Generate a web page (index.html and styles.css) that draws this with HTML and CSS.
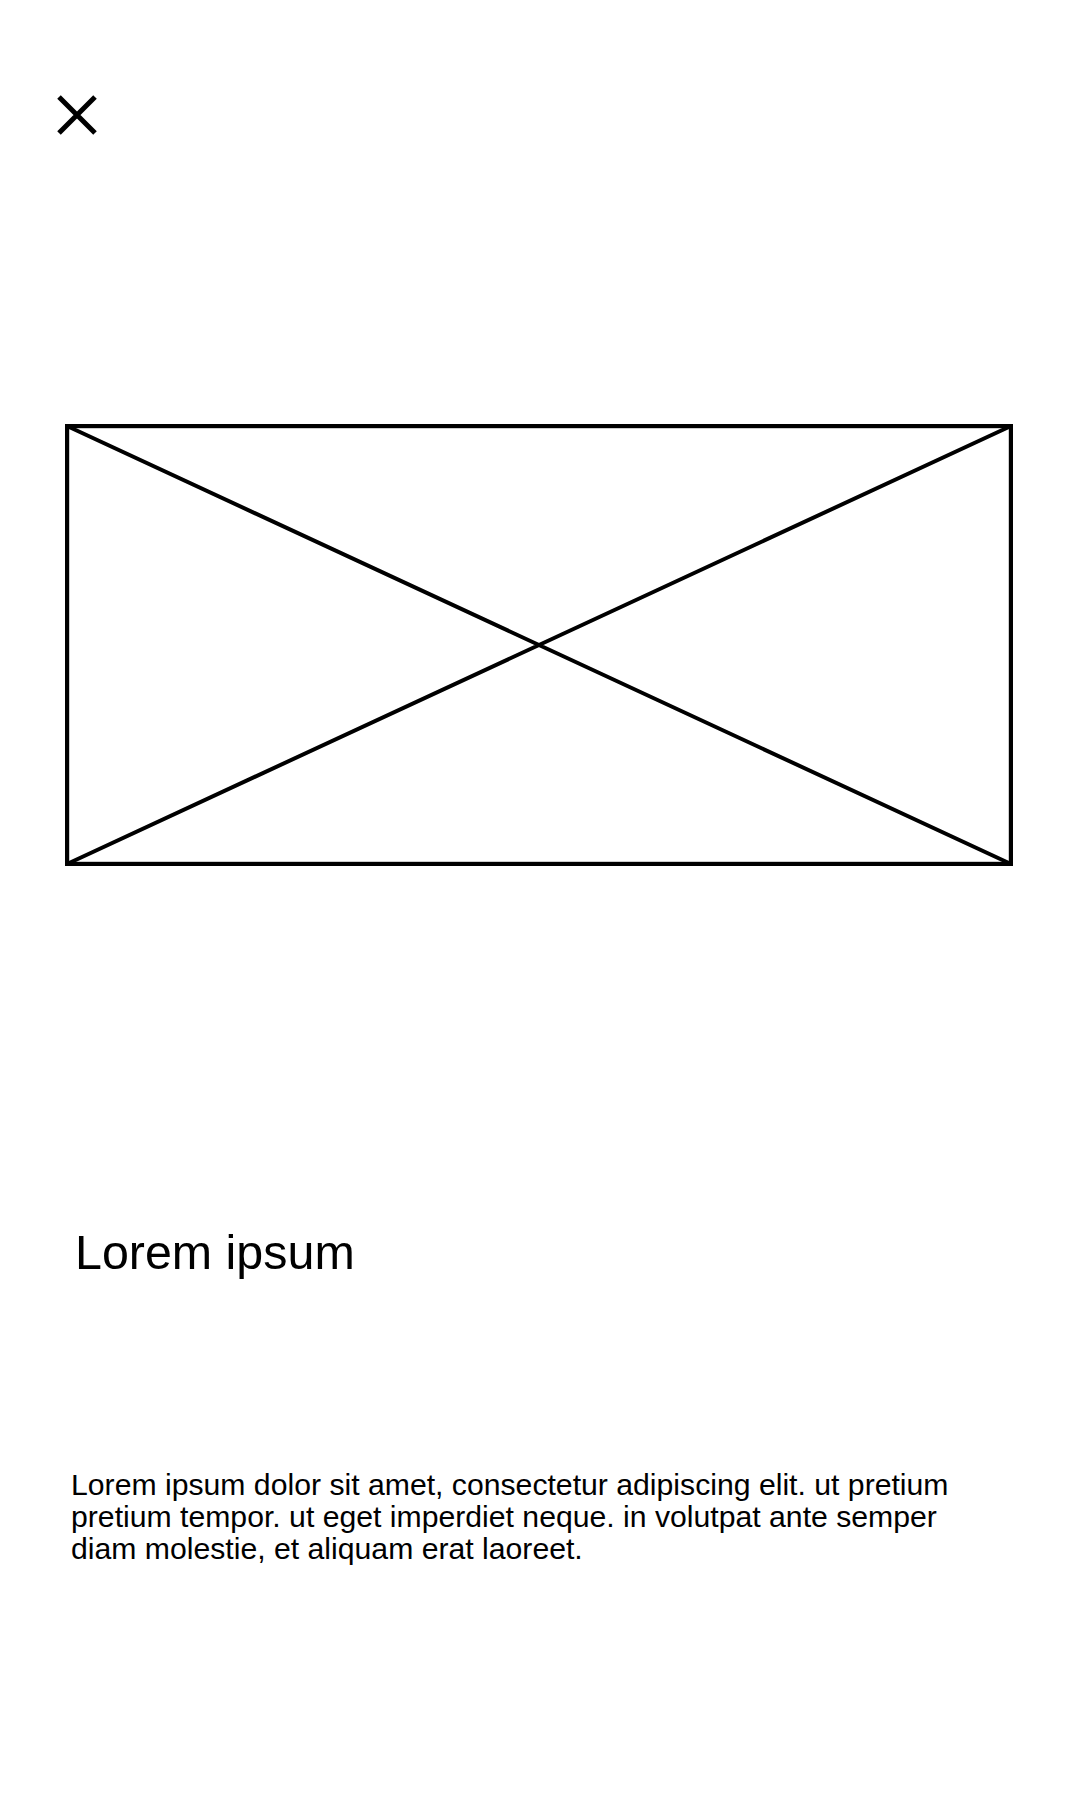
FILE: index.html
```html
<!DOCTYPE html>
<html lang="en">
	<head>
	<meta charset="UTF-8" />
	<meta name="viewport" content="width=device-width, initial-scale=1.0" />
	<title>Detail</title>
	<link rel="stylesheet" href="styles.css">
	</head>
	<body>
		<div id="screen">
			<div class="top-bar">
				<button class="close-btn" aria-label="Close">
					<svg width="40" height="40" viewBox="0 0 40 40">
						<path d="M2 2 L38 38 M38 2 L2 38" stroke="#000" stroke-width="5" fill="none" />
					</svg>
				</button>
			</div>

			<div class="image-placeholder">
				<svg width="948" height="442" viewBox="0 0 948 442">
					<rect x="2" y="2" width="944" height="438" stroke="#000" stroke-width="4.4" fill="none" />
					<path d="M2 2 L946 440 M946 2 L2 440" stroke="#000" stroke-width="4" fill="none" />
				</svg>
			</div>

			<h1 class="title">Lorem ipsum</h1>

			<p class="description">Lorem ipsum dolor sit amet, consectetur adipiscing elit. ut pretium pretium tempor. ut eget imperdiet neque. in volutpat ante semper diam molestie, et aliquam erat laoreet.</p>
		</div>
	</body>
</html>
```
FILE: styles.css
```css
* {
	padding: 0;
	margin: 0;
	box-sizing: border-box;
}

body {
	background: #fff;
	color: #000;
	font-family: 'Liberation Sans', Arial, sans-serif;
}

#screen {
	width: 1080px;
	min-height: 1800px;
	display: flex;
	flex-direction: column;
}

.top-bar {
	padding: 95px 0 0 57px;
	display: flex;
}

.close-btn {
	width: 40px;
	height: 40px;
	border: none;
	background: none;
	display: block;
	cursor: pointer;
}

.close-btn svg {
	display: block;
}

.image-placeholder {
	margin: 289px 0 0 65px;
	width: 948px;
	height: 442px;
}

.image-placeholder svg {
	display: block;
}

.title {
	margin: 362px 0 0 75px;
	font-size: 48.4px;
	font-weight: normal;
	line-height: 1;
}

.description {
	margin: 193px 0 0 71px;
	width: 900px;
	font-size: 30.2px;
	line-height: 32px;
}
```
